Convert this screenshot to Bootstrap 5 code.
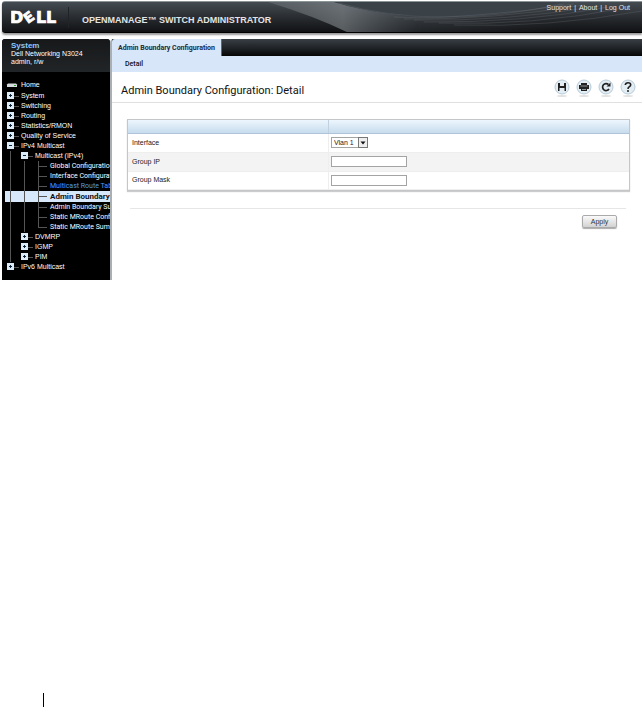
<!DOCTYPE html>
<html lang="en">
<head>
<meta charset="utf-8">
<meta name="viewport" content="width=device-width, initial-scale=1">
<title>OpenManage Switch Administrator</title>
<link href="https://cdn.jsdelivr.net/npm/bootstrap@5.3.0/dist/css/bootstrap.min.css" rel="stylesheet">
<style>
body{font:7px/10px "Liberation Sans",Arial,sans-serif;color:#222;background:#fff}
a{text-decoration:none;color:inherit}
.masthead{margin:1px 0 0 2px;height:32px;background:linear-gradient(#444c52,#2c3034 45%,#101113);border-top:1px solid #8a9499;border-bottom:1px solid #000;border-radius:3px 0 0 3px;box-shadow:0 2px 2px #999}
.swoosh{left:41%;top:0;width:59%;height:100%}
.brand{margin:0 9px;width:48px;height:30px}
.product{font:700 9px/15px "Liberation Sans",Arial,sans-serif;color:#e4e4e4;border-left:1px solid #202427;padding:6px 0 0 13px}
.toplinks{gap:3px;color:#e0e3e6;padding:1px 12px 0 0}
.shell{margin:6px 0 0 2px}
.side{width:108px;height:241px;background:#000;color:#fff;border-radius:3px 3px 0 0}
.device{height:33px;padding:3px 0 0 9px;background:linear-gradient(#16181a,#222527);line-height:8px;border-radius:3px 3px 0 0}
.device strong{font-size:8px;color:#8cc8ff}
.tree{padding:8px 0 0 3px}
.tree li{height:10px;padding-left:1px}
.tree li:first-child,.tree li.current{height:11px}
.cell{width:14px;flex:none;position:relative;height:100%}
.cell.v{background:linear-gradient(#555,#555) 4px 0/1px 100% no-repeat}
.cell.t{background:linear-gradient(#555,#555) 8px 5px/5px 1px no-repeat}
.cell.leaf{background:linear-gradient(#555,#555) 4px 0/1px 100% no-repeat,linear-gradient(#555,#555) 4px 5px/9px 1px no-repeat}
.cell.last{background:linear-gradient(#555,#555) 4px 0/1px 5px no-repeat,linear-gradient(#555,#555) 4px 5px/9px 1px no-repeat}
.toggle{display:block;width:7px;height:7px;margin:1px 0 0 1px;padding:0;border:0;background:linear-gradient(#123,#123) center/3px 1px no-repeat,#dcebf8}
.toggle.plus{background:linear-gradient(#123,#123) center/3px 1px no-repeat,linear-gradient(#123,#123) center/1px 3px no-repeat,#dcebf8}
.home{display:block;margin-top:1px}
.tree a{padding-left:1px}
.tree .leaf+a,.tree .last+a{padding-left:2px;font-family:Roboto,"Liberation Sans",sans-serif}
.tree .current{background:#d7e8fb;color:#111;font-weight:700;font-size:8px}
.tree .current a{line-height:11px}
.tree .route{color:#4f9cf0}
.main{border-left:2px solid #a9afb3;border-radius:4px 0 0 0;height:241px}
.tabbar{height:17px;background:linear-gradient(#383f44,#1c1f22 60%,#050505)}
.tabbar a{width:110px;background:#d7e6f9;color:#1d2a3a;font:700 7px/18px Roboto,"Liberation Sans",sans-serif;border-radius:3px 0 0 0;border-right:1px solid #666}
.subbar{height:16px;background:#d7e6f9;padding-left:13px;color:#111;font:500 7px/17px Roboto,"Liberation Sans",sans-serif}
.heading{height:31px;padding:6px 6px 0 9px;border-bottom:1px solid #e0e0e0}
.heading h1{font:11px/25px Roboto,"Liberation Sans",sans-serif;color:#111}
.tools{gap:6px}
.tools button{width:16px;height:20px;padding:0;border:0;background:none;display:block}
.tools svg{display:block}
.panel{margin:16px 12px 0 15px;border:1px solid #c3c7ca;box-shadow:0 1px 1px #ccc}
.panel table{width:100%;table-layout:fixed;border-collapse:collapse}
.panel th:first-child{width:40%}
.panel thead th{height:13px;background:linear-gradient(#edf6fd,#c7dced);border-bottom:1px solid #afc4d8}
.panel thead th+th{border-left:1px solid #c0d0df}
.panel td,.panel tbody th{padding:0 4px;height:19px;vertical-align:middle;font-weight:400;border-bottom:1px solid #eee}
.panel tbody tr:last-child>*{height:18px}
.panel td{padding-left:2px;border-left:1px solid #eee}
.panel .alt{background:#f3f3f3}
.panel input{display:block;width:76px;height:11px;border:1px solid #a4a4a4;border-radius:0;padding:0 2px;background:#fff;font-size:7px}
.pick{width:37px;height:11px}
.pick select{width:100%;height:100%;display:block;appearance:none;border:1px solid #a4a4a4;border-radius:0;padding:0 0 0 2px;background:#fff;color:#222;font:7px/9px "Liberation Sans",Arial,sans-serif}
.pick svg{right:0;top:0;pointer-events:none}
.actions{margin:17px 16px 0 18px;border-top:1px solid #e6e6e6;padding:6px 9px 0 0}
.apply{width:35px;height:13px;padding:0;border:1px solid #aaa;border-radius:2px;background:linear-gradient(#fafafa,#d2d2d2);box-shadow:0 1px 1px #aaa;color:#333;font-size:7px;line-height:11px}
.rule{width:1px;height:14px;margin-left:43px;background:#000}
</style>
</head>
<body class="d-flex flex-column min-vh-100">
<header class="masthead d-flex position-relative overflow-visible">
<svg class="swoosh position-absolute" viewBox="0 0 378 30" preserveAspectRatio="none" aria-hidden="true">
<defs><linearGradient id="g"><stop offset="0" stop-color="#777d82" stop-opacity=".4"/><stop offset=".2" stop-color="#888e92" stop-opacity=".6"/><stop offset=".4" stop-color="#667078" stop-opacity=".2"/><stop offset=".8" stop-color="#555" stop-opacity="0"/></linearGradient></defs>
<path d="M4 0H70Q170 30 300 0H378V30H83Q50 14 4 0" fill="url(#g)"/>
<path d="M70 0Q170 30 300 0Z" fill="#3a4147"/>
<path d="M75 1Q170 29 300 2M130 15Q200 18 310 2M140 17Q230 18 320 3M150 18Q240 20 335 4M160 20Q260 21 345 5M175 21Q270 24 360 6M190 23Q285 26 378 9" fill="none" stroke="#8a9299" stroke-opacity=".3" stroke-width=".7"/>
</svg>
<svg class="brand" viewBox="0 0 48 30" role="img" aria-label="Dell"><g fill="#fff" stroke="#fff" stroke-width=".7" font-family="DejaVu Sans" font-weight="700" font-size="16"><text x="-1" y="21">D</text><text x="13" y="20" font-size="14" transform="rotate(-35 18 15)">E</text><text x="25" y="21">L</text><text x="35" y="21">L</text></g></svg>
<div class="product align-self-center">OPENMANAGE™ SWITCH ADMINISTRATOR</div>
<nav class="toplinks d-flex ms-auto position-relative"><a href="#">Support</a><span>|</span><a href="#">About</a><span>|</span><a href="#">Log Out</a></nav>
</header>
<div class="shell d-flex">
<aside class="side flex-shrink-0 overflow-hidden">
<div class="device"><strong>System</strong><div>Dell Networking N3024</div><div>admin, r/w</div></div>
<ul class="tree list-unstyled mb-0 text-nowrap">
<li class="d-flex"><span class="cell"><svg class="home" width="12" height="9" viewBox="0 0 12 9" aria-hidden="true"><path d="M1 3.500 2 2.500H10L11 3.500V6H1Z" fill="#d5dade"/><path d="M8 4.500H10" stroke="#3a3"/></svg></span><a href="#">Home</a></li>
<li class="d-flex"><span class="cell t"><button class="toggle plus" aria-label="Expand System"></button></span><a href="#">System</a></li>
<li class="d-flex"><span class="cell t"><button class="toggle plus" aria-label="Expand Switching"></button></span><a href="#">Switching</a></li>
<li class="d-flex"><span class="cell t"><button class="toggle plus" aria-label="Expand Routing"></button></span><a href="#">Routing</a></li>
<li class="d-flex"><span class="cell t"><button class="toggle plus" aria-label="Expand Statistics"></button></span><a href="#">Statistics/RMON</a></li>
<li class="d-flex"><span class="cell t"><button class="toggle plus" aria-label="Expand Quality of Service"></button></span><a href="#">Quality of Service</a></li>
<li class="d-flex"><span class="cell t"><button class="toggle" aria-label="Collapse IPv4 Multicast"></button></span><a href="#">IPv4 Multicast</a></li>
<li class="d-flex"><span class="cell v"></span><span class="cell t"><button class="toggle" aria-label="Collapse Multicast"></button></span><a href="#">Multicast (IPv4)</a></li>
<li class="d-flex"><span class="cell v"></span><span class="cell v"></span><span class="cell leaf"></span><a href="#">Global Configuratio</a></li>
<li class="d-flex"><span class="cell v"></span><span class="cell v"></span><span class="cell leaf"></span><a href="#">Interface Configurat</a></li>
<li class="d-flex route"><span class="cell v"></span><span class="cell v"></span><span class="cell leaf"></span><a href="#">Multicast Route Tab</a></li>
<li class="d-flex current"><span class="cell v"></span><span class="cell v"></span><span class="cell leaf"></span><a href="#">Admin Boundary</a></li>
<li class="d-flex"><span class="cell v"></span><span class="cell v"></span><span class="cell leaf"></span><a href="#">Admin Boundary Su</a></li>
<li class="d-flex"><span class="cell v"></span><span class="cell v"></span><span class="cell leaf"></span><a href="#">Static MRoute Confi</a></li>
<li class="d-flex"><span class="cell v"></span><span class="cell v"></span><span class="cell last"></span><a href="#">Static MRoute Sum</a></li>
<li class="d-flex"><span class="cell v"></span><span class="cell t"><button class="toggle plus" aria-label="Expand DVMRP"></button></span><a href="#">DVMRP</a></li>
<li class="d-flex"><span class="cell v"></span><span class="cell t"><button class="toggle plus" aria-label="Expand IGMP"></button></span><a href="#">IGMP</a></li>
<li class="d-flex"><span class="cell v"></span><span class="cell t"><button class="toggle plus" aria-label="Expand PIM"></button></span><a href="#">PIM</a></li>
<li class="d-flex"><span class="cell t"><button class="toggle plus" aria-label="Expand IPv6 Multicast"></button></span><a href="#">IPv6 Multicast</a></li>
</ul>
</aside>
<main class="main flex-grow-1">
<nav class="tabbar"><a class="d-block text-center" href="#">Admin Boundary Configuration</a></nav>
<nav class="subbar"><a href="#">Detail</a></nav>
<div class="heading d-flex justify-content-between">
<h1 class="m-0">Admin Boundary Configuration: Detail</h1>
<div class="tools d-flex">
<button aria-label="Save"><svg width="16" height="20" viewBox="0 0 16 20"><ellipse cx="8" cy="18" rx="5" ry="1" fill="#e2e2e2"/><circle cx="8" cy="9" r="7" fill="#e3edf4" stroke="#b7cbd8"/><path d="M4 5H6V8H10V5H12V13H10.500V10H5.500V13H4Z" fill="#222"/></svg></button>
<button aria-label="Print"><svg width="16" height="20" viewBox="0 0 16 20"><ellipse cx="8" cy="18" rx="5" ry="1" fill="#e2e2e2"/><circle cx="8" cy="9" r="7" fill="#e3edf4" stroke="#b7cbd8"/><path d="M5 5H11V7H13V11H11V13H5V11H3V7H5Z" fill="#222"/><path d="M4.500 8H11.500M6 11.500H10" stroke="#a9b4bc" stroke-width=".8"/></svg></button>
<button aria-label="Refresh"><svg width="16" height="20" viewBox="0 0 16 20"><ellipse cx="8" cy="18" rx="5" ry="1" fill="#e2e2e2"/><circle cx="8" cy="9" r="7" fill="#e3edf4" stroke="#b7cbd8"/><path d="M10.500 6.500A3.500 3.500 0 1 0 11 11" fill="none" stroke="#222" stroke-width="1.700"/><path d="M12.500 4.500V8.500H8.500Z" fill="#222"/></svg></button>
<button aria-label="Help"><svg width="16" height="20" viewBox="0 0 16 20"><ellipse cx="8" cy="18" rx="5" ry="1" fill="#e2e2e2"/><circle cx="8" cy="9" r="7" fill="#e3edf4" stroke="#b7cbd8"/><path d="M5.300 7Q5.500 4.700 8 4.700 10.700 4.700 10.700 6.800 10.700 8 9.300 8.800 8 9.500 8 11" fill="none" stroke="#222" stroke-width="1.600"/><circle cx="8" cy="13" r="1" fill="#222"/></svg></button>
</div>
</div>
<form>
<div class="panel"><table>
<thead><tr><th></th><th></th></tr></thead>
<tbody>
<tr><th scope="row"><label class="d-block" for="iface">Interface</label></th><td><div class="pick position-relative"><select id="iface"><option>Vlan 1</option></select><svg class="position-absolute" width="10" height="11" viewBox="0 0 10 11" aria-hidden="true"><rect x=".5" y=".5" width="9" height="10" fill="#eee" stroke="#777"/><path d="M2.500 4.500H7.500L5 7.500Z" fill="#111"/></svg></div></td></tr>
<tr class="alt"><th scope="row"><label class="d-block" for="ip">Group IP</label></th><td><input id="ip" type="text"></td></tr>
<tr><th scope="row"><label class="d-block" for="mask">Group Mask</label></th><td><input id="mask" type="text"></td></tr>
</tbody>
</table></div>
<div class="actions d-flex justify-content-end"><button type="button" class="apply">Apply</button></div>
</form>
</main>
</div>
<footer class="mt-auto"><div class="rule"></div></footer>
<script src="https://cdn.jsdelivr.net/npm/bootstrap@5.3.0/dist/js/bootstrap.bundle.min.js"></script>
</body>
</html>
